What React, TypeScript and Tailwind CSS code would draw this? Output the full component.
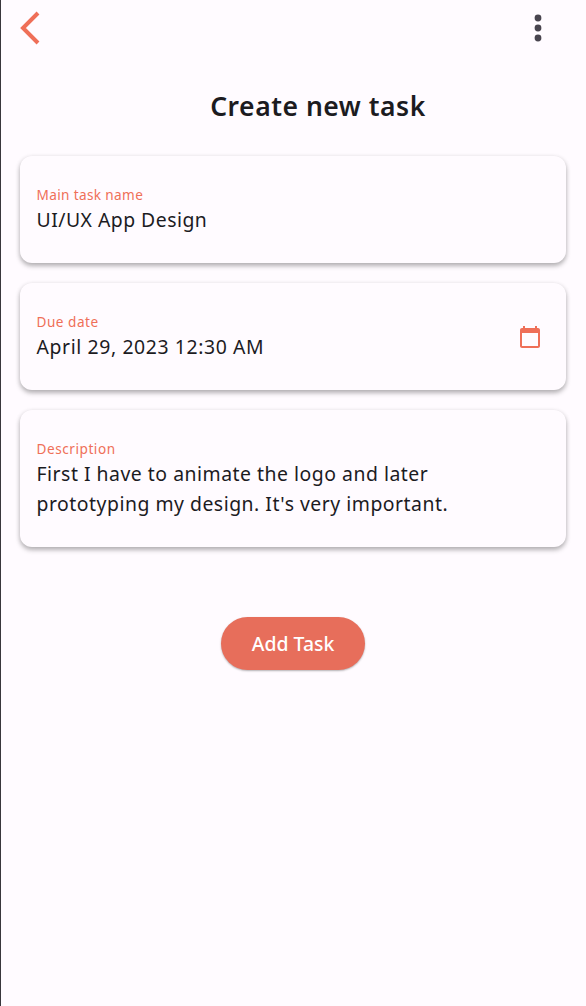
import type { ReactNode } from "react";

function Line({ children, className }: { children: ReactNode; className: string }) {
  return <span className={`block whitespace-nowrap ${className}`}>{children}</span>;
}

function Field({ label, labelClass, icon, children }: { label: string; labelClass: string; icon?: ReactNode; children: ReactNode }) {
  return (
    <section className="flex items-center justify-between rounded-xl bg-[#fffbff] pt-[29px] pr-6 pb-[28px] pl-[16.5px] shadow-[0_3px_5px_0_rgba(0,0,0,0.26),0_1px_5px_0_rgba(0,0,0,0.1)]">
      <div>
        <div className={`h-5 text-[13.6px] leading-5 whitespace-nowrap text-[#ef6f58] ${labelClass}`}>{label}</div>
        <div className="text-[19.4px] leading-[30px] text-[#1c1b1f]">{children}</div>
      </div>
      {icon}
    </section>
  );
}

function CalendarIcon() {
  return (
    <svg width="24" height="24" viewBox="0 0 24 24" fill="#ef6f58" aria-hidden="true">
      <path d="M20 3h-1V1h-2v2H7V1H5v2H4c-1.1 0-2 .9-2 2v16c0 1.1.9 2 2 2h16c1.1 0 2-.9 2-2V5c0-1.1-.9-2-2-2zm0 18H4V8h16v13z" />
    </svg>
  );
}

export default function App() {
  return (
    <main className="min-h-[1006px] border-l border-[#39373c] bg-[#fffbff] font-['Noto_Sans','Open_Sans',sans-serif]">
      <header className="flex h-14 items-center justify-between pr-[30px] pl-[19px]">
        <button aria-label="Back">
          <svg className="block" width="20" height="34" viewBox="0 0 20 34" fill="none" stroke="#ef6f58" strokeWidth="4">
            <path d="M18 2 3 17l15 15" />
          </svg>
        </button>
        <button aria-label="More options">
          <svg className="block" width="36" height="36" viewBox="0 0 36 36" fill="#49454f">
            <circle cx="18" cy="8" r="3.4" />
            <circle cx="18" cy="18" r="3.4" />
            <circle cx="18" cy="28" r="3.4" />
          </svg>
        </button>
      </header>
      <h1 className="flex h-[100px] justify-center pt-[30px] pl-[49px] text-[26.5px] leading-10 font-semibold tracking-[0.53px] whitespace-nowrap text-[#1c1b1f]">
        Create new task
      </h1>
      <div className="flex flex-col gap-5 pr-5 pl-[19px]">
        <Field label="Main task name" labelClass="tracking-[0.36px]">
          <Line className="tracking-[0.48px]">UI/UX App Design</Line>
        </Field>
        <Field label="Due date" labelClass="tracking-[0.5px]" icon={<CalendarIcon />}>
          <Line className="tracking-[0.61px]">April 29, 2023 12:30 AM</Line>
        </Field>
        <Field label="Description" labelClass="tracking-[0.54px]">
          <Line className="tracking-[0.51px]">First I have to animate the logo and later</Line>
          <Line className="tracking-[0.51px]">prototyping my design. It's very important.</Line>
        </Field>
      </div>
      <div className="flex justify-center pt-[70px] pr-px">
        <button className="h-[53px] w-36 rounded-full bg-[#e76e5b] text-[19.4px] font-medium whitespace-nowrap text-white shadow-[0_1px_2px_0_rgba(0,0,0,0.3)]">
          Add Task
        </button>
      </div>
    </main>
  );
}
